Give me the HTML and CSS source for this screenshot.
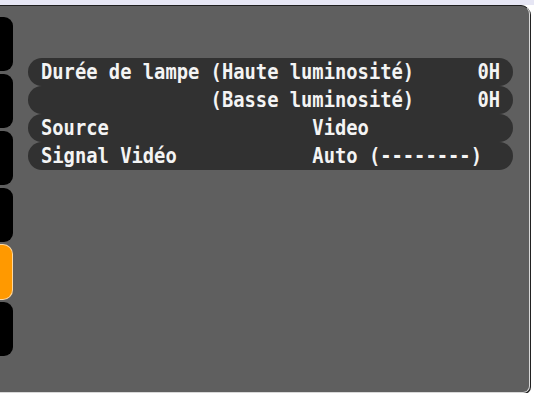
FILE: index.html
```html
<!DOCTYPE html>
<html lang="fr">
<head>
    <meta charset="UTF-8">
    <title>Info</title>
    <link rel="stylesheet" href="styles.css">
</head>
<body>
    <div class="screen">
        <div class="tabs">
            <div class="tab"></div>
            <div class="tab"></div>
            <div class="tab"></div>
            <div class="tab"></div>
            <div class="tab active"></div>
            <div class="tab"></div>
        </div>

        <div class="info">
            <div class="row">
                <span class="label">Durée de lampe</span>
                <span class="value">(Haute luminosité)</span>
                <span class="hours">0H</span>
            </div>
            <div class="row">
                <span class="label"></span>
                <span class="value">(Basse luminosité)</span>
                <span class="hours">0H</span>
            </div>
            <div class="row">
                <span class="label wide">Source</span>
                <span class="value">Video</span>
            </div>
            <div class="row">
                <span class="label wide">Signal Vidéo</span>
                <span class="value">Auto (--------)</span>
            </div>
        </div>
    </div>
</body>
</html>
```

FILE: styles.css
```css
body {
    margin: 0;
    background-color: #fff;
    border-top: 5px solid #e6e6f4;
}
.screen {
    display: flex;
    width: 529px;
    height: 386px;
    background-color: #5f5f5f;
    border-top: 1px solid #1e1e1e;
    border-right: 1px solid #d8d8d8;
    border-bottom: 1px solid #d8d8d8;
    box-shadow: 1px 1px 0 #222;
    border-radius: 0 9px 7px 0;
}
.tabs {
    display: flex;
    flex-direction: column;
    padding-top: 11px;
}
.tab {
    width: 13px;
    height: 54px;
    margin-bottom: 3px;
    background-color: #000;
    border-radius: 0 9px 9px 0;
}
.tab.active {
    background-color: #ff9900;
    box-shadow: 0 0 0 1px #ffd9a0;
    width: 12px;
}
.info {
    padding: 52px 0 0 15px;
    font-family: "DejaVu Sans Mono", monospace;
    font-weight: bold;
    font-size: 18.8px;
    color: #f4f4f4;
}
.row {
    display: flex;
    width: 459px;
    height: 28px;
    line-height: 28px;
    padding-left: 13px;
    padding-right: 13px;
    background-color: #313131;
    border-radius: 14px;
    white-space: pre;
}
.row span {
    display: inline-block;
    transform: scaleY(1.15);
}
.label {
    width: 15ch;
}
.label.wide {
    width: 24ch;
}
.hours {
    margin-left: auto;
}
```
